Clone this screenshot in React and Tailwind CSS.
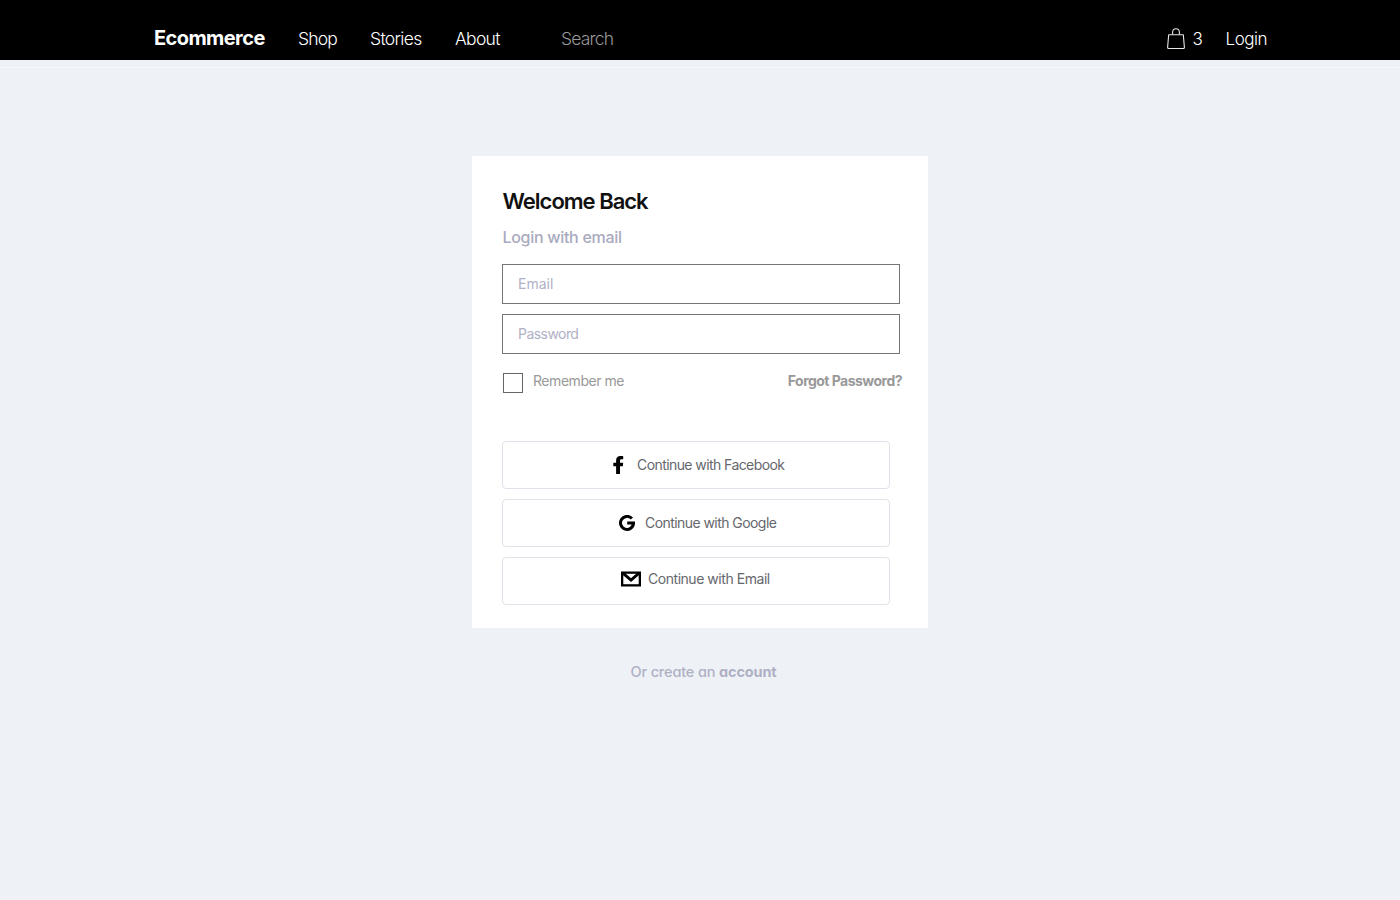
import React from "react";

function BagIcon() {
  return (
    <svg width="20" height="22" viewBox="0 0 20 22" fill="none" stroke="#e8e8e8" strokeWidth="1.1" strokeLinejoin="round">
      <path d="M2.7 6.7H17.3L18.4 19.2Q18.5 20.5 17.2 20.5H2.8Q1.5 20.5 1.6 19.2Z" />
      <path d="M6.6 6.6V4.2Q6.8 0.8 10 0.8T13.4 4.2V6.6" />
    </svg>
  );
}

function FacebookIcon() {
  return (
    <svg width="12" height="18" viewBox="0 0 12 18" fill="#000">
      <path d="M4.1 18V10.2H1.3V6.7H4.1V4.5C4.1 1.8 5.6 0.1 8.4 0.1C9.6 0.1 10.5 0.2 11.2 0.3V3.2H9.4C8.2 3.2 8 3.8 8 4.7V6.7H11.2L10.8 10.2H8V18Z" />
    </svg>
  );
}

function GoogleIcon() {
  return (
    <svg width="16" height="16" viewBox="0 0 16 16" fill="none" stroke="#000" strokeWidth="3">
      <path d="M12.9 3.6A6.5 6.5 0 1 0 14.5 8.1H8.2" />
    </svg>
  );
}

function MailIcon() {
  return (
    <svg width="20" height="16" viewBox="0 0 20 16" fill="none" stroke="#000">
      <rect x="1.15" y="1.65" width="17.7" height="12.7" strokeWidth="2.3" />
      <path d="M1.6 1.8L10 9L18.4 1.8" strokeWidth="2.9" />
    </svg>
  );
}

function SocialButton({ icon, label, className, gap, textClass }) {
  return (
    <button className={`flex h-12 w-[388px] items-center rounded border border-[#e1e2e9] bg-white text-[14px] leading-5 text-[#66676d] ${className} ${gap}`}>
      {icon}
      <span className={`whitespace-nowrap ${textClass}`}>{label}</span>
    </button>
  );
}

export default function App() {
  return (
    <div className="min-h-screen bg-[#eef2f7] font-['Inter',sans-serif]">
      <header className="flex h-[60px] items-center bg-black pt-[17px] pr-[133px] pl-[154px] text-[17.5px] leading-6 whitespace-nowrap text-white">
        <span className="mb-[2px] w-36 text-[20px] font-bold tracking-[-0.58px]">Ecommerce</span>
        <nav className="flex font-light">
          <a className="w-[72px] tracking-[-0.8px]">Shop</a>
          <a className="w-[85px] tracking-[-0.65px]">Stories</a>
          <a className="w-[106px] tracking-[-0.7px]">About</a>
        </nav>
        <span className="font-light tracking-[-0.8px] text-[#989898]">Search</span>
        <div className="ml-auto flex items-center text-[17px] font-light">
          <BagIcon />
          <span className="mt-px ml-[7px] w-[33px]">3</span>
          <a className="mt-px tracking-[-0.5px]">Login</a>
        </div>
      </header>
      <div className="h-[7px] bg-[#eef2f7]" />
      <div className="h-px bg-[#f7f8fb]" />
      <main className="flex flex-col items-center pt-[88px]">
        <section className="h-[472px] w-[456px] bg-white pt-[30px] pl-[30px]">
          <h1 className="h-[30px] pl-[0.5px] text-[22px] leading-[30px] font-semibold tracking-[-1px] text-[#111]">Welcome Back</h1>
          <p className="mt-[9px] h-6 pl-[0.5px] text-[16px] leading-6 font-[450] tracking-[-0.3px] text-[#aaaabf]">Login with email</p>
          <form className="mt-[15px]">
            <div className="flex flex-col gap-[10px] text-[14px] leading-5 text-[#b0b0c6]">
              <div className="flex h-10 w-[398px] items-center border border-[#757575] pl-[15px]"><span>Email</span></div>
              <div className="flex h-10 w-[398px] items-center border border-[#757575] pl-[15px]"><span className="tracking-[-0.55px]">Password</span></div>
            </div>
            <div className="mt-[17px] flex h-[22px] w-[400px] items-start pl-px text-[14px] leading-5 text-[#999]">
              <span className="mt-[2px] h-5 w-5 border border-[#666]" />
              <span className="ml-[10px] tracking-[-0.45px]">Remember me</span>
              <a className="ml-auto font-bold tracking-[-0.53px]">Forgot Password?</a>
            </div>
          </form>
          <div className="mt-12 flex flex-col gap-[10px]">
            <SocialButton icon={<FacebookIcon />} label="Continue with Facebook" className="pl-[109px]" gap="gap-[13px]" textClass="tracking-[-0.58px]" />
            <SocialButton icon={<GoogleIcon />} label="Continue with Google" className="pl-[116px]" gap="gap-[10px]" textClass="tracking-[-0.56px]" />
            <SocialButton icon={<MailIcon />} label="Continue with Email" className="pb-[4px] pl-[118px]" gap="gap-[7px]" textClass="tracking-[-0.46px]" />
          </div>
        </section>
        <p className="mt-[34px] ml-[7px] text-[14.5px] leading-5 font-medium tracking-[-0.15px] text-[#b0b0c4] [font-feature-settings:'cv11']">
          Or create an <a className="font-bold">account</a>
        </p>
      </main>
    </div>
  );
}
